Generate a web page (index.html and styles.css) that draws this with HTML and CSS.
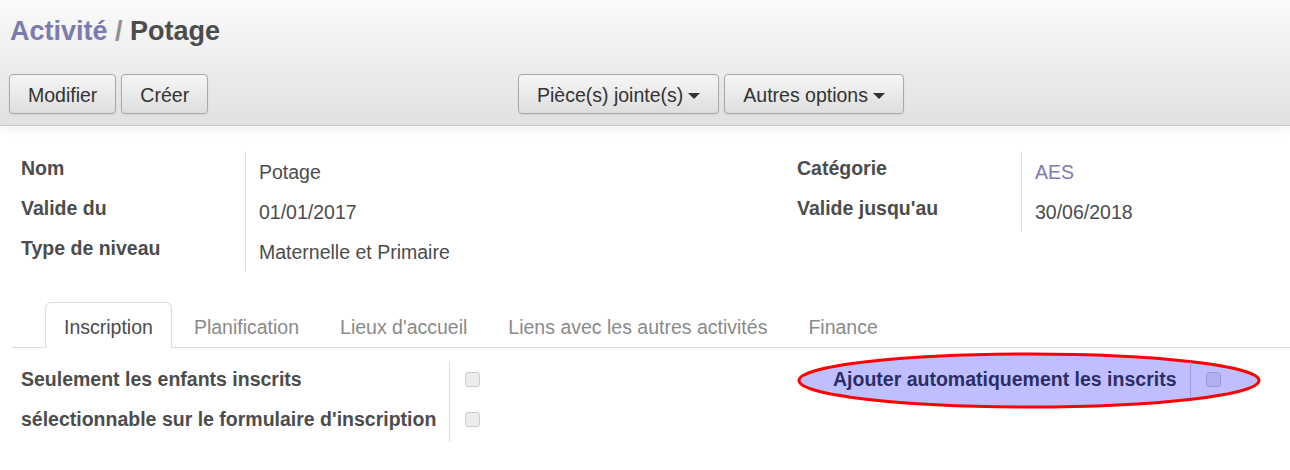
FILE: index.html
```html
<!DOCTYPE html>
<html lang="fr">
<head>
<meta charset="utf-8">
<title>Activité / Potage</title>
<link rel="stylesheet" href="styles.css">
</head>
<body>
<header class="cp">
  <h1 class="breadcrumb"><a class="crumb-link">Activité</a><span class="crumb-sep"> / </span><span class="crumb-current">Potage</span></h1>
  <div class="cp-bar">
    <div class="btn-group">
      <button class="btn">Modifier</button>
      <button class="btn">Créer</button>
    </div>
    <div class="btn-group">
      <button class="btn">Pièce(s) jointe(s) <span class="caret"></span></button>
      <button class="btn">Autres options <span class="caret"></span></button>
    </div>
  </div>
</header>
<main class="sheet">
  <div class="groups top-groups">
    <div class="group">
      <div class="lbl">Nom</div><div class="val">Potage</div>
      <div class="lbl">Valide du</div><div class="val">01/01/2017</div>
      <div class="lbl">Type de niveau</div><div class="val">Maternelle et Primaire</div>
    </div>
    <div class="group">
      <div class="lbl">Catégorie</div><div class="val"><a class="link">AES</a></div>
      <div class="lbl">Valide jusqu'au</div><div class="val">30/06/2018</div>
    </div>
  </div>
  <nav class="tabs">
    <span class="tab active">Inscription</span>
    <span class="tab">Planification</span>
    <span class="tab">Lieux d'accueil</span>
    <span class="tab">Liens avec les autres activités</span>
    <span class="tab">Finance</span>
  </nav>
  <div class="groups bottom-groups">
    <div class="group auto">
      <div class="lbl">Seulement les enfants inscrits</div><div class="val"><span class="cb"></span></div>
      <div class="lbl">sélectionnable sur le formulaire d'inscription</div><div class="val"><span class="cb"></span></div>
    </div>
    <div class="group auto highlighted">
      <svg class="mark" width="466" height="58" viewBox="0 0 466 58" aria-hidden="true">
        <ellipse cx="233" cy="28.5" rx="230" ry="26.5" fill="#bfbfff" stroke="#ff0000" stroke-width="3"/>
      </svg>
      <div class="lbl">Ajouter automatiquement les inscrits</div><div class="val"><span class="cb"></span></div>
    </div>
  </div>
</main>
</body>
</html>
```

FILE: styles.css
```css
html, body {
  margin: 0;
  padding: 0;
  background: #ffffff;
}

body {
  font-family: "Liberation Sans", Arial, sans-serif;
  font-size: 19.5px;
  line-height: 27.86px;
  color: #4c4c4c;
  width: 1290px;
  height: 470px;
  overflow: hidden;
}

/* ---------- control panel ---------- */
.cp {
  height: 126px;
  box-sizing: border-box;
  padding: 16px 0 0 9px;
  background: linear-gradient(to bottom, #fafafa 0%, #e1e1e1 100%);
  border-bottom: 1px solid #c9c9c9;
  box-shadow: 0 2px 10px rgba(0, 0, 0, 0.08);
  position: relative;
  z-index: 1;
}

.breadcrumb {
  margin: 0 0 0 1px;
  font-size: 27px;
  line-height: 31px;
  font-weight: bold;
  height: 31px;
}

.crumb-link {
  color: #7c7bad;
}

.crumb-sep {
  color: #8f8f8f;
}

.crumb-current {
  color: #4c4c4c;
}

.cp-bar {
  display: grid;
  grid-template-columns: 509px auto;
  margin-top: 27px;
}

.btn-group {
  display: flex;
  gap: 5px;
}

.btn {
  font-family: inherit;
  font-size: 19.5px;
  line-height: 27.86px;
  color: #333333;
  padding: 7px 18px 3px;
  height: 40px;
  box-sizing: border-box;
  border: 1px solid #a9a9a9;
  border-radius: 4px;
  background: linear-gradient(to bottom, #f6f6f6 0%, #dedede 100%);
  box-shadow: 0 1px 2px rgba(0, 0, 0, 0.08);
  margin: 0;
  display: inline-flex;
  align-items: center;
}

.caret {
  display: inline-block;
  width: 0;
  height: 0;
  margin-left: 5px;
  border-top: 6px solid #333333;
  border-left: 6px solid transparent;
  border-right: 6px solid transparent;
}

/* ---------- sheet ---------- */
.sheet {
  padding-top: 25px;
}

.groups {
  display: grid;
  padding-left: 21px;
}

.top-groups {
  grid-template-columns: 776px 1fr;
}

.bottom-groups {
  grid-template-columns: 812px 1fr;
  margin-top: 14px;
}

.group {
  display: grid;
  grid-template-columns: 225px 1fr;
  grid-auto-rows: 40px;
  align-content: start;
}

.group.auto {
  grid-template-columns: max-content 1fr;
}

.lbl {
  font-weight: bold;
  padding-top: 4px;
  padding-right: 13px;
  border-right: 1px solid #dddddd;
  white-space: nowrap;
}

.val {
  padding-left: 13px;
  padding-top: 8px;
}

.link {
  color: #7c7bad;
}

.cb {
  display: block;
  width: 15px;
  height: 15px;
  box-sizing: border-box;
  margin: 2px 0 0 2px;
  border: 1px solid #cccccc;
  border-radius: 3px;
  background: #ececec;
}

/* ---------- tabs ---------- */
.tabs {
  display: flex;
  margin: 31px 0 0 12px;
  padding-left: 33px;
  border-bottom: 1px solid #dddddd;
  height: 45px;
}

.tab {
  display: block;
  padding: 11px 18px 6px;
  line-height: 27px;
  border: 1px solid transparent;
  border-bottom: none;
  border-radius: 6px 6px 0 0;
  margin-right: 3px;
  color: #8a8a8a;
  white-space: nowrap;
}

.tab.active {
  color: #4c4c4c;
  background: #ffffff;
  border-color: #dddddd;
  box-sizing: border-box;
  margin-bottom: -1px;
  height: 46px;
}

/* ---------- highlighted field ---------- */
.highlighted {
  position: relative;
}

.mark {
  position: absolute;
  left: -37px;
  top: -10px;
  z-index: 0;
}

.highlighted .lbl,
.highlighted .val {
  position: relative;
  z-index: 1;
}

.highlighted .lbl {
  color: #2c2c66;
  border-right-color: #9d9dd6;
  height: 36px;
  box-sizing: border-box;
}

.highlighted .cb {
  background: #b0b0ee;
  border-color: #9a9ad8;
}
```
